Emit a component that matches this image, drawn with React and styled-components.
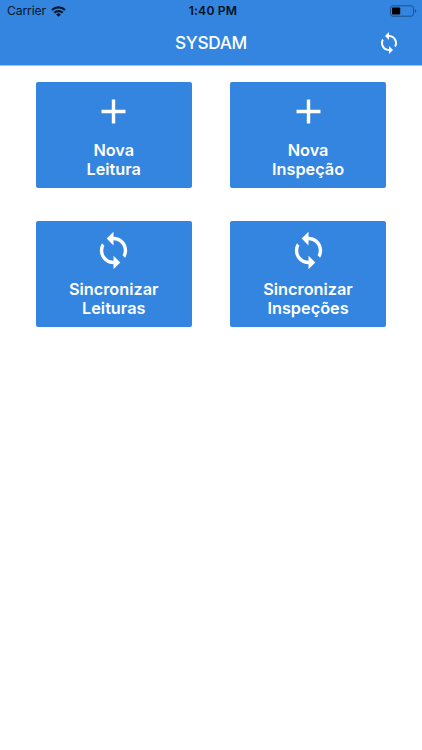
import React from 'react';
import styled, { createGlobalStyle } from 'styled-components';
import { MdAdd, MdSync } from 'react-icons/md';

const primary = '#3385e0';

const GlobalStyle = createGlobalStyle`
  body {
    margin: 0;
    background-color: white;
    font-family: Inter, "Liberation Sans", sans-serif;
  }
`;

const Screen = styled.div`
  display: flex;
  flex-direction: column;
  min-height: 100vh;
`;

const Header = styled.header`
  height: 65px;
  border-bottom: 1px solid #9cc4f0;
  background-color: ${primary};
  background-clip: padding-box;
`;

const StatusBar = styled.div`
  height: 22px;
  box-sizing: border-box;
  padding: 0 5px 0 7px;
  display: grid;
  grid-template-columns: 1fr auto 1fr;
  align-items: center;
  color: #06182c;
  font-size: 12.2px;
  line-height: 22px;
`;

const Carrier = styled.div`
  display: flex;
  align-items: center;
  gap: 5px;
  letter-spacing: -0.15px;
`;

const Time = styled.div`
  font-weight: 600;
  font-size: 12.2px;
  letter-spacing: 0.15px;
  color: #04101f;
  padding-left: 2px;
`;

const Battery = styled.svg`
  justify-self: end;
`;

const NavBar = styled.nav`
  height: 42px;
  padding: 0 21px;
  display: grid;
  grid-template-columns: 24px 1fr 24px;
  align-items: center;
  color: white;
`;

const Title = styled.h1`
  margin: 0;
  padding-bottom: 1px;
  text-align: center;
  font-size: 17.2px;
  line-height: 20px;
  font-weight: 500;
  letter-spacing: -0.3px;
`;

const IconButton = styled.button`
  display: flex;
  padding: 0;
  border: 0;
  background: none;
  color: white;
  font-size: 24px;
`;

const Menu = styled.main`
  display: grid;
  grid-template-columns: 155.5px 155.5px;
  grid-auto-rows: 106px;
  column-gap: 38.8px;
  row-gap: 33px;
  padding: 16px 36px;
`;

const Tile = styled.button`
  display: flex;
  flex-direction: column;
  align-items: center;
  padding: 9px 0 0;
  border: 0;
  border-radius: 2px;
  background-color: ${primary};
  color: white;
  font-family: inherit;
  font-size: 16.3px;
  font-weight: 600;
  line-height: 19.6px;

  svg {
    flex: none;
    font-size: 41px;
    margin-bottom: 8.8px;
  }
`;

const actions = [
  { Icon: MdAdd, verb: 'Nova', subject: 'Leitura' },
  { Icon: MdAdd, verb: 'Nova', subject: 'Inspeção' },
  { Icon: MdSync, verb: 'Sincronizar', subject: 'Leituras' },
  { Icon: MdSync, verb: 'Sincronizar', subject: 'Inspeções' },
];

function Wifi() {
  return (
    <svg width="15" height="11" viewBox="0 0 15 11" fill="none" stroke="currentColor" strokeWidth="2.3">
      <path d="M1 4a9.3 9.3 0 0 1 13 0" />
      <path d="M3.3 6.8a5.9 5.9 0 0 1 8.4 0" />
      <path d="M7.5 10.8 5.1 8.5a3.4 3.4 0 0 1 4.8 0Z" fill="currentColor" stroke="none" />
    </svg>
  );
}

export default function App() {
  return (
    <Screen>
      <GlobalStyle />
      <Header>
        <StatusBar>
          <Carrier>
            Carrier
            <Wifi />
          </Carrier>
          <Time>1:40 PM</Time>
          <Battery width="27" height="12" viewBox="0 0 27 12">
            <rect x="0.5" y="0.8" width="23" height="10.4" rx="2.4" fill="none" stroke="#1c508c" />
            <rect x="2" y="2.4" width="8.2" height="7.2" rx="0.8" fill="#000" />
            <path d="M25 4v4a2.2 2.2 0 0 0 0-4Z" fill="#1c508c" />
          </Battery>
        </StatusBar>
        <NavBar>
          <span />
          <Title>SYSDAM</Title>
          <IconButton aria-label="Sincronizar"><MdSync /></IconButton>
        </NavBar>
      </Header>
      <Menu>
        {actions.map(({ Icon, verb, subject }) => (
          <Tile key={`${verb} ${subject}`}>
            <Icon />
            <span>{verb}</span>
            <span>{subject}</span>
          </Tile>
        ))}
      </Menu>
    </Screen>
  );
}
